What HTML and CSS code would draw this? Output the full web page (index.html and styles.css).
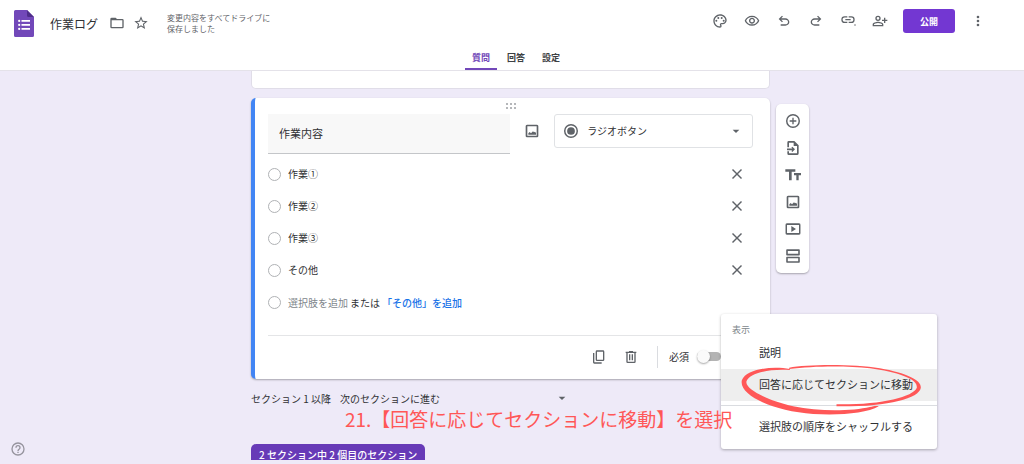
FILE: index.html
```html
<!DOCTYPE html>
<html lang="ja">
<head>
    <meta charset="UTF-8">
    <meta name="viewport" content="width=device-width, initial-scale=1.0">
    <title>作業ログ</title>
    <link rel="stylesheet" href="styles.css">
</head>
<body>
    <!-- Shared icons -->
    <svg class="sprite" aria-hidden="true">
        <symbol id="close" viewBox="0 0 24 24"><path d="M19.500 6L18 4.500l-6 6-6-6L4.500 6l6 6-6 6L6 19.500l6-6 6 6 1.500-1.500-6-6z"/></symbol>
        <symbol id="image" viewBox="0 0 24 24"><path d="M19 2.500H5A2.300 2.300 0 0 0 2.500 5v14A2.300 2.300 0 0 0 5 21.500h14a2.300 2.300 0 0 0 2.500-2.500V5A2.300 2.300 0 0 0 19 2.500zm0 16.500H5V5h14v14zM6.500 17.500v-2l2-2 2 2 3-3 1.500 1.500 1.500-1 1.500 2v2.500z"/></symbol>
        <symbol id="arrow" viewBox="0 0 24 24"><path d="M7 10l5 5 5-5z"/></symbol>
    </svg>

    <header class="header">
        <div class="topbar">
            <svg class="logo" viewBox="0 0 20 27">
                <path fill="#7248b9" d="M1.500 0H13l7 7v18.500a1.500 1.500 0 0 1-1.500 1.500h-17A1.500 1.500 0 0 1 0 25.500v-24A1.500 1.500 0 0 1 1.500 0z"/>
                <path fill="#4f2e8a" d="M13 0l7 7h-5.500A1.500 1.500 0 0 1 13 5.500z"/>
                <path fill="#fff" d="M7.500 10H16v1.700H7.500zM7.500 14H16v1.700H7.500zM7.500 18H16v1.700H7.500z"/>
                <circle fill="#fff" cx="5.200" cy="10.900" r="1.100"/>
                <circle fill="#fff" cx="5.200" cy="14.900" r="1.100"/>
                <circle fill="#fff" cx="5.200" cy="18.900" r="1.100"/>
            </svg>
            <h1 class="title">作業ログ</h1>
            <button class="icon-button folder" aria-label="移動">
                <svg viewBox="0 0 24 24"><path d="M20 6h-8l-2-2H4a2 2 0 0 0-2 2v12a2 2 0 0 0 2 2h16a2 2 0 0 0 2-2V8a2 2 0 0 0-2-2zm0 12H4V8h16v10z"/></svg>
            </button>
            <button class="icon-button" aria-label="スター">
                <svg viewBox="0 0 24 24"><path d="M22 9.240l-7.190-.620L12 2 9.190 8.630 2 9.240l5.460 4.730L5.820 21 12 17.270 18.180 21l-1.630-7.030L22 9.240zM12 15.400l-3.760 2.270 1-4.280-3.320-2.880 4.380-.380L12 6.100l1.710 4.040 4.380.380-3.320 2.880 1 4.280L12 15.400z"/></svg>
            </button>
            <p class="status">変更内容をすべてドライブに<br>保存しました</p>

            <div class="actions">
                <button class="icon-button" aria-label="テーマ">
                    <svg viewBox="0 0 24 24"><path d="M12 22C6.490 22 2 17.510 2 12S6.490 2 12 2s10 4.040 10 9c0 3.310-2.690 6-6 6h-1.770c-.280 0-.500.220-.500.500 0 .120.050.230.130.330.410.470.640 1.060.640 1.670A2.500 2.500 0 0 1 12 22zm0-18c-4.410 0-8 3.590-8 8s3.590 8 8 8c.280 0 .500-.220.500-.500a.540.540 0 0 0-.140-.350c-.410-.460-.630-1.050-.630-1.650a2.500 2.500 0 0 1 2.500-2.500H16c2.210 0 4-1.790 4-4 0-3.860-3.590-7-8-7z"/><circle cx="6.500" cy="11.500" r="1.500"/><circle cx="9.500" cy="7.500" r="1.500"/><circle cx="14.500" cy="7.500" r="1.500"/><circle cx="17.500" cy="11.500" r="1.500"/></svg>
                </button>
                <button class="icon-button" aria-label="プレビュー">
                    <svg viewBox="0 0 24 24"><path d="M12 6a9.770 9.770 0 0 1 8.820 5.500A9.770 9.770 0 0 1 12 17a9.770 9.770 0 0 1-8.820-5.500A9.770 9.770 0 0 1 12 6m0-2C7 4 2.730 7.110 1 11.500 2.730 15.890 7 19 12 19s9.270-3.110 11-7.500C21.270 7.110 17 4 12 4zm0 5a2.500 2.500 0 1 1 0 5 2.500 2.500 0 0 1 0-5m0-2c-2.480 0-4.500 2.020-4.500 4.500S9.520 16 12 16s4.500-2.020 4.500-4.500S14.480 7 12 7z"/></svg>
                </button>
                <button class="icon-button" aria-label="元に戻す">
                    <svg viewBox="0 0 24 24"><path d="M7 19v-2h7.100q1.575 0 2.737-1T18 13.500 16.837 11 14.100 10H7.800l2.600 2.600L9 14 4 9l5-5 1.400 1.400L7.800 8h6.300q2.425 0 4.163 1.575T20 13.500t-1.737 3.925T14.100 19z"/></svg>
                </button>
                <button class="icon-button" aria-label="やり直す">
                    <svg viewBox="0 0 24 24"><path d="M17 19v-2H9.900q-1.575 0-2.737-1T6 13.500 7.163 11 9.900 10h6.300l-2.600 2.600L15 14l5-5-5-5-1.400 1.400L16.200 8H9.900q-2.425 0-4.163 1.575T4 13.500t1.737 3.925T9.900 19z"/></svg>
                </button>
                <button class="icon-button" aria-label="リンクをコピー">
                    <svg viewBox="0 0 24 24"><path d="M3.900 10c0-1.710 1.390-3.100 3.100-3.100h4V5H7a5 5 0 0 0 0 10h4v-1.900H7A3.100 3.100 0 0 1 3.900 10zM8 11h8V9H8v2zm9-6h-4v1.900h4a3.100 3.100 0 0 1 0 6.200h-4V15h4a5 5 0 0 0 0-10z"/><circle cx="22.500" cy="18" r="1.100"/></svg>
                </button>
                <button class="icon-button" aria-label="共同編集者を追加">
                    <svg viewBox="0 0 24 24"><path d="M9 12a4 4 0 1 0 0-8 4 4 0 0 0 0 8zm0-6a2 2 0 1 1 0 4 2 2 0 0 1 0-4zm0 7c-2.670 0-8 1.340-8 4v3h16v-3c0-2.660-5.330-4-8-4zm6 5H3v-1c0-.640 3-2 6-2s6 1.360 6 2v1zm5-8V7h-2v3h-3v2h3v3h2v-3h3v-2z"/></svg>
                </button>
                <button class="publish">公開</button>
                <button class="icon-button" aria-label="その他のオプション">
                    <svg viewBox="0 0 24 24"><path d="M12 8a2 2 0 1 0 0-4 2 2 0 0 0 0 4zm0 2a2 2 0 1 0 0 4 2 2 0 0 0 0-4zm0 6a2 2 0 1 0 0 4 2 2 0 0 0 0-4z"/></svg>
                </button>
            </div>
        </div>
        <nav class="tabs">
            <a class="tab active" href="#questions">質問</a>
            <a class="tab" href="#responses">回答</a>
            <a class="tab" href="#settings">設定</a>
        </nav>
    </header>

    <main class="main">
        <div class="column">
            <div class="previous-card"></div>

            <section class="card" id="questions">
                <svg class="drag" viewBox="0 0 12 6">
                    <path d="M1 0h2v2H1zM5 0h2v2H5zM9 0h2v2H9zM1 4h2v2H1zM5 4h2v2H5zM9 4h2v2H9z"/>
                </svg>
                <div class="question">
                    <input class="question-title" type="text" value="作業内容" aria-label="質問">
                    <button class="icon-button" aria-label="画像を追加"><svg><use href="#image"/></svg></button>
                    <div class="type">
                        <svg viewBox="0 0 24 24"><path d="M12 1.500a10.500 10.500 0 1 0 0 21 10.500 10.500 0 0 0 0-21zm0 18.800a8.300 8.300 0 1 1 0-16.600 8.300 8.300 0 0 1 0 16.600z"/><circle cx="12" cy="12" r="5.800"/></svg>
                        <select class="type-select" aria-label="質問の種類">
                            <option>ラジオボタン</option>
                        </select>
                        <svg><use href="#arrow"/></svg>
                    </div>
                </div>

                <div class="options">
                    <div class="option">
                        <input class="radio" type="radio" name="work" aria-label="作業①">
                        <input class="option-text" type="text" value="作業①" aria-label="選択肢 1">
                        <button class="icon-button" aria-label="削除"><svg><use href="#close"/></svg></button>
                    </div>
                    <div class="option">
                        <input class="radio" type="radio" name="work" aria-label="作業②">
                        <input class="option-text" type="text" value="作業②" aria-label="選択肢 2">
                        <button class="icon-button" aria-label="削除"><svg><use href="#close"/></svg></button>
                    </div>
                    <div class="option">
                        <input class="radio" type="radio" name="work" aria-label="作業③">
                        <input class="option-text" type="text" value="作業③" aria-label="選択肢 3">
                        <button class="icon-button" aria-label="削除"><svg><use href="#close"/></svg></button>
                    </div>
                    <div class="option">
                        <input class="radio" type="radio" name="work" aria-label="その他">
                        <input class="option-text" type="text" value="その他" aria-label="選択肢 4">
                        <button class="icon-button" aria-label="削除"><svg><use href="#close"/></svg></button>
                    </div>
                    <div class="option">
                        <input class="radio" type="radio" name="work" aria-label="選択肢を追加">
                        <button class="add-option">選択肢を追加</button>
                        <span class="or">または</span>
                        <button class="add-other">「その他」を追加</button>
                    </div>
                </div>

                <div class="card-footer">
                    <button class="icon-button" aria-label="コピーを作成">
                        <svg viewBox="0 0 24 24"><path d="M9 18a2 2 0 0 1-2-2V4a2 2 0 0 1 2-2h9a2 2 0 0 1 2 2v12a2 2 0 0 1-2 2zm0-2h9V4H9zm-4 6a2 2 0 0 1-2-2V6h2v14h11v2z"/></svg>
                    </button>
                    <button class="icon-button" aria-label="削除">
                        <svg viewBox="0 0 24 24"><path d="M15 4V3H9v1H4v2h1v13a2 2 0 0 0 2 2h10a2 2 0 0 0 2-2V6h1V4h-5zm2 15H7V6h10v13zM9 8h2v9H9zm4 0h2v9h-2z"/></svg>
                    </button>
                    <label class="required">必須 <input class="switch" type="checkbox"></label>
                </div>

                <div class="menu">
                    <p class="menu-heading">表示</p>
                    <button class="menu-item">説明</button>
                    <button class="menu-item selected">回答に応じてセクションに移動</button>
                    <hr class="menu-line">
                    <button class="menu-item">選択肢の順序をシャッフルする</button>
                    <svg class="circle" viewBox="535 185 560 165">
                        <path d="M690 206C640 197 560 204 546 240C536 285 640 332 760 341C840 345 920 340 957 318C950 315 940 318 930 320C880 332 780 335 700 318C620 300 554 265 560 243C568 220 620 205 690 209Z"/>
                        <path d="M688 202C740 192 880 190 960 204C1040 218 1085 240 1083 262C1078 295 980 320 830 318L830 312C960 314 1060 290 1071 262C1075 235 1010 215 930 204C860 196 760 197 688 206Z"/>
                    </svg>
                </div>
                <p class="note">21.【回答に応じてセクションに移動】を選択</p>
            </section>

            <div class="after-section">
                <label for="next">セクション 1 以降</label>
                <select class="next-select" id="next">
                    <option>次のセクションに進む</option>
                </select>
                <svg><use href="#arrow"/></svg>
            </div>
            <div class="section-label">2 セクション中 2 個目のセクション</div>
        </div>

        <aside class="toolbar">
            <button class="icon-button" aria-label="質問を追加">
                <svg viewBox="0 0 24 24"><path d="M13 7h-2v4H7v2h4v4h2v-4h4v-2h-4V7zm-1-5.500a10.500 10.500 0 1 0 0 21 10.500 10.500 0 0 0 0-21zm0 18.800a8.300 8.300 0 1 1 0-16.600 8.300 8.300 0 0 1 0 16.600z"/></svg>
            </button>
            <button class="icon-button" aria-label="質問をインポート">
                <svg viewBox="0 0 24 24"><path d="M14 1.500H6A2.200 2.200 0 0 0 3.500 4v7H6V4h7v5h5v11H6v-3H3.500v3A2.200 2.200 0 0 0 6 22.500h12a2.300 2.300 0 0 0 2.500-2.500V8zM11 10l4 4-4 4-1.400-1.400 1.400-1.400H3v-2.400h8l-1.400-1.400z"/></svg>
            </button>
            <button class="icon-button" aria-label="タイトルと説明を追加">
                <svg viewBox="0 0 24 24"><path d="M.500 3.500V7H6v13h4V7h5.500V3.500zM24 9H13.500v3.200H17V20h3.500v-7.800H24z"/></svg>
            </button>
            <button class="icon-button" aria-label="画像を追加"><svg><use href="#image"/></svg></button>
            <button class="icon-button" aria-label="動画を追加">
                <svg viewBox="0 0 24 24"><path d="M9.500 7.500v9l7-4.500zM21 3.500H3A2.200 2.200 0 0 0 .800 6v12A2.200 2.200 0 0 0 3 20.500h18a2.200 2.200 0 0 0 2.200-2.500V6A2.200 2.200 0 0 0 21 3.500zM21 18H3V6h18v12z"/></svg>
            </button>
            <button class="icon-button" aria-label="セクションを追加">
                <svg viewBox="0 0 24 24"><path d="M3 2h18a1.200 1.200 0 0 1 1.200 1.200V10a1.200 1.200 0 0 1-1.200 1.200H3A1.200 1.200 0 0 1 1.800 10V3.200A1.200 1.200 0 0 1 3 2zm1.200 2.400v4.400h15.600V4.400zM3 13h18a1.200 1.200 0 0 1 1.200 1.200V21a1.200 1.200 0 0 1-1.200 1.200H3A1.200 1.200 0 0 1 1.800 21v-6.800A1.200 1.200 0 0 1 3 13zm1.200 2.400v4.400h15.600v-4.400z"/></svg>
            </button>
        </aside>
    </main>

    <button class="help" aria-label="ヘルプ">
        <svg viewBox="0 0 24 24"><path d="M11 18h2v-2h-2v2zm1-16a10 10 0 1 0 0 20 10 10 0 0 0 0-20zm0 18a8 8 0 1 1 0-16 8 8 0 0 1 0 16zm0-14a4 4 0 0 0-4 4h2a2 2 0 1 1 4 0c0 2-3 1.750-3 5h2c0-2.250 3-2.500 3-5a4 4 0 0 0-4-4z"/></svg>
    </button>
</body>
</html>
```
FILE: styles.css
```css
* {
    box-sizing: border-box;
}
body {
    margin: 0;
    height: 100vh;
    padding-bottom: 4px;
    display: flex;
    flex-direction: column;
    overflow: hidden;
    background-color: #eeeaf8;
    color: #303134;
    font-family: "Noto Sans CJK JP", sans-serif;
    font-size: 10px;
}
h1, p {
    margin: 0;
}
button, input, select {
    margin: 0;
    padding: 0;
    border: none;
    background: none;
    color: inherit;
    font: inherit;
}
button {
    cursor: pointer;
}
svg {
    display: block;
    flex: none;
    width: 16px;
    height: 16px;
    fill: #5f6368;
}
.sprite {
    position: absolute;
    width: 0;
    height: 0;
}
.icon-button {
    display: flex;
    flex: none;
    align-items: center;
    justify-content: center;
    width: 24px;
    height: 24px;
}

/* Header */
.header {
    flex: none;
    background-color: #fff;
    border-bottom: 1px solid #e4e2e9;
}
.topbar {
    display: flex;
    align-items: center;
    height: 46px;
    padding: 0 34px 0 14px;
}
.logo {
    width: 20px;
    height: 27px;
}
.title {
    margin-left: 16px;
    font-size: 12px;
    font-weight: 400;
}
.folder {
    margin-left: 7px;
}
.status {
    margin-left: 14px;
    color: #5f6368;
    font-size: 8px;
    line-height: 11px;
}
.actions {
    display: flex;
    align-items: center;
    gap: 8px;
    margin-left: auto;
    padding-bottom: 4px;
}
.publish {
    width: 52px;
    height: 24px;
    margin: 0 3px;
    border-radius: 3px;
    background-color: #7337d2;
    color: #fff;
    font-size: 9px;
    font-weight: 700;
}
.tabs {
    display: flex;
    justify-content: center;
    gap: 3px;
    padding-left: 8px;
}
.tab {
    width: 32px;
    height: 24px;
    border-bottom: 2px solid transparent;
    color: #3c4043;
    font-size: 9px;
    font-weight: 700;
    line-height: 24px;
    text-align: center;
    text-decoration: none;
}
.tab.active {
    border-color: #7248b9;
    color: #7248b9;
}

/* Form editor */
.main {
    flex: 1;
    min-height: 0;
    display: grid;
    grid-template-columns: 1fr minmax(0, 519px) 1fr;
    column-gap: 6px;
    padding-right: 3px;
    overflow: hidden;
}
.column {
    grid-column: 2;
}
.previous-card {
    height: 18px;
    margin-bottom: 9px;
    border: 1px solid #e0dde8;
    border-top: none;
    border-radius: 0 0 5px 5px;
    background-color: #fff;
}
.card {
    position: relative;
    padding: 5px 17px 0 13px;
    border-left: 4px solid #4285f4;
    border-radius: 5px;
    background-color: #fff;
    box-shadow: 0 1px 2px rgba(0, 0, 0, 0.3);
}
.drag {
    width: 12px;
    height: 6px;
    margin: 0 auto 5px;
    fill: #b5b7ba;
}
.question {
    display: flex;
    align-items: flex-start;
    gap: 10px;
}
.question .icon-button {
    height: 33px;
}
.question-title {
    flex: 1;
    min-width: 0;
    height: 40px;
    padding: 0 11px 2px;
    border-bottom: 1px solid #c4c6c9;
    background-color: #f8f8f8;
    font-size: 11px;
}
.type {
    display: flex;
    align-items: center;
    width: 41%;
    height: 34px;
    padding: 0 8px;
    border: 1px solid #e0e2e5;
    border-radius: 3px;
}
.type-select {
    flex: 1;
    min-width: 0;
    height: 20px;
    margin-left: 8px;
    padding-bottom: 2px;
    appearance: none;
}
.options {
    padding: 4px 4px 0 0;
}
.option {
    display: flex;
    align-items: center;
    height: 32px;
}
.radio {
    flex: none;
    width: 13px;
    height: 13px;
    border: 1px solid #b0b2b5;
    border-radius: 50%;
    appearance: none;
}
.option-text {
    flex: 1;
    min-width: 0;
    height: 20px;
    margin-left: 7px;
    padding-bottom: 2px;
}
.add-option {
    margin-left: 7px;
    color: #80868b;
}
.or {
    margin-left: 2px;
}
.add-other {
    margin-left: 2px;
    color: #1a73e8;
    font-weight: 500;
}
.card-footer {
    display: flex;
    align-items: center;
    justify-content: flex-end;
    gap: 8px;
    height: 44px;
    margin-top: 17px;
    padding: 0 32px 2px 0;
    border-top: 1px solid #e4e5e7;
}
.required {
    display: flex;
    align-items: center;
    gap: 8px;
    height: 22px;
    margin-left: 6px;
    padding-left: 11px;
    border-left: 1px solid #dadce0;
}
.switch {
    display: flex;
    align-items: center;
    width: 24px;
    height: 9px;
    border-radius: 5px;
    background-color: #b4b4b4;
    appearance: none;
}
.switch::before {
    content: "";
    width: 13px;
    height: 13px;
    border-radius: 50%;
    background-color: #fafafa;
    box-shadow: 0 1px 2px rgba(0, 0, 0, 0.35);
}

/* Menu opened over the card */
.menu {
    position: absolute;
    top: 216px;
    right: -167px;
    width: 216px;
    padding: 9px 0 6px;
    border-radius: 3px;
    background-color: #fff;
    box-shadow: 0 1px 3px rgba(0, 0, 0, 0.3);
}
.menu-heading {
    padding-left: 11px;
    color: #80868b;
    font-size: 9px;
    line-height: 14px;
}
.menu-item {
    display: block;
    width: 100%;
    height: 32px;
    padding: 0 0 2px 38px;
    font-size: 11px;
    text-align: left;
}
.menu-item.selected {
    background-color: #eee;
}
.menu-line {
    margin: 4px 0 5px;
    border: none;
    border-top: 1px solid #dadce0;
}
.circle {
    position: absolute;
    top: 48px;
    left: 17px;
    width: 187px;
    height: 55px;
    fill: #ff5757;
}
.note {
    position: absolute;
    top: 307px;
    left: 90px;
    color: #ff5757;
    font-size: 19px;
    font-weight: 400;
    line-height: 28px;
    white-space: nowrap;
}

.after-section {
    display: flex;
    align-items: center;
    height: 38px;
}
.next-select {
    width: 214px;
    margin-left: 9px;
    appearance: none;
}
.section-label {
    width: fit-content;
    margin-top: 27px;
    padding: 0 8px;
    border-radius: 5px 5px 0 0;
    background-color: #673ab7;
    color: #fff;
    font-weight: 500;
    line-height: 22px;
}
.toolbar {
    display: flex;
    flex-direction: column;
    align-items: center;
    align-self: start;
    gap: 3px;
    width: 33px;
    margin-top: 33px;
    padding: 5px 0;
    border-radius: 5px;
    background-color: #fff;
    box-shadow: 0 1px 2px rgba(0, 0, 0, 0.3);
}
.help {
    position: fixed;
    bottom: 7px;
    left: 10px;
}
.help svg {
    fill: #96949e;
}
```
